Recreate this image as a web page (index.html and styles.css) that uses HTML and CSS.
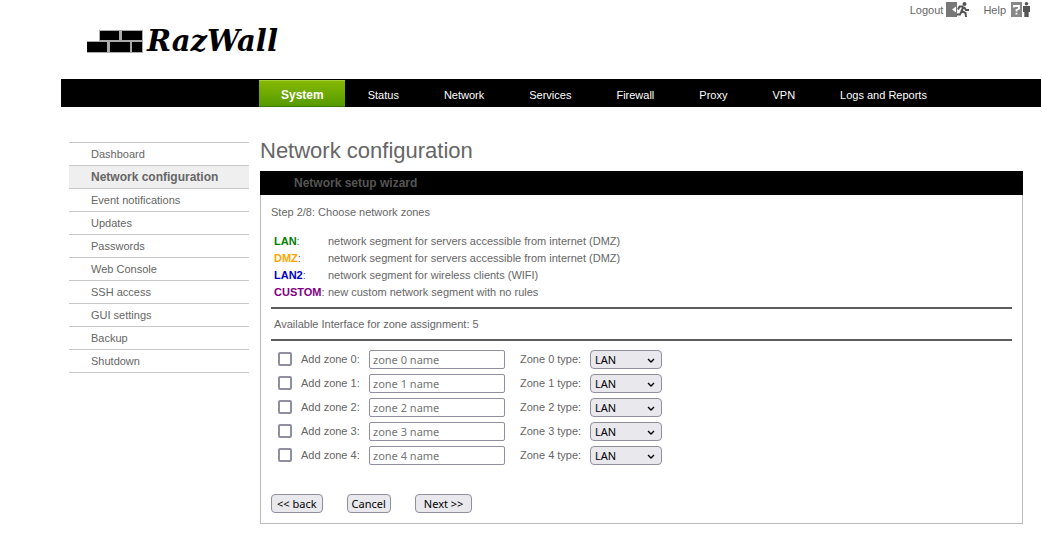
FILE: index.html
```html
<!DOCTYPE html>
<html lang="en">
<head>
<meta charset="utf-8">
<title>RazWall - Network configuration</title>
<link rel="stylesheet" href="styles.css">
</head>
<body>
<div class="page">
  <header class="header">
    <a class="logo" href="#">
      <svg class="logo-bricks" width="56" height="23" viewBox="0 0 56 23" aria-hidden="true">
        <path fill="#aaa" d="M12 0h44v11h-44zM0 11h56v12H0z"/>
        <path d="M13 1h19v9H13zM35 1h20v9H35zM0 12h20v10H0zM23 12h20v10H23zM45 12h10v10H45z"/>
      </svg>
      <span class="logo-name">RazWall</span>
    </a>
    <div class="tools">
      <a href="#">Logout
        <svg width="24" height="16" viewBox="0 0 24 16" aria-hidden="true">
          <path fill="#777" d="M0 0h11v15H0z"/>
          <path fill="#fff" d="M6 7.500l4-3v6z"/>
          <circle cx="18.500" cy="2" r="2" fill="#555"/>
          <path fill="none" stroke="#555" stroke-width="2" d="M17.500 4.500l-2 4.500 4 2 .5 4M15.500 9.500l-1.500 3h-3M17.500 4.500h-4l-1.500 3M18 5l2 3h3"/>
        </svg>
      </a>
      <a href="#">Help
        <svg width="21" height="16" viewBox="0 0 21 16" aria-hidden="true">
          <path fill="#888" d="M0 0h11v15H0z"/>
          <path fill="none" stroke="#fff" stroke-width="1.800" d="M3 5.500V4h5v2.800L5.500 8v1.500M5.500 10.700V12.500"/>
          <circle cx="15.500" cy="1.800" r="1.800" fill="#555"/>
          <path fill="#555" d="M12 4h7v6h-1.300v5h-4.400v-5H12z"/>
        </svg>
      </a>
    </div>
  </header>

  <nav class="menu" aria-label="Main">
    <a class="active" href="#">System</a>
    <a href="#">Status</a>
    <a href="#">Network</a>
    <a href="#">Services</a>
    <a href="#">Firewall</a>
    <a href="#">Proxy</a>
    <a href="#">VPN</a>
    <a href="#">Logs and Reports</a>
  </nav>

  <div class="columns">
    <nav class="side" aria-label="System">
      <a href="#">Dashboard</a>
      <a class="active" href="#">Network configuration</a>
      <a href="#">Event notifications</a>
      <a href="#">Updates</a>
      <a href="#">Passwords</a>
      <a href="#">Web Console</a>
      <a href="#">SSH access</a>
      <a href="#">GUI settings</a>
      <a href="#">Backup</a>
      <a href="#">Shutdown</a>
    </nav>

    <main class="content">
      <h1>Network configuration</h1>
      <section class="panel">
        <h2>Network setup wizard</h2>
        <form class="wizard">
          <p class="step">Step 2/8: Choose network zones</p>
          <dl class="legend">
            <dt><b class="lan">LAN</b>:</dt><dd>network segment for servers accessible from internet (DMZ)</dd>
            <dt><b class="dmz">DMZ</b>:</dt><dd>network segment for servers accessible from internet (DMZ)</dd>
            <dt><b class="lan2">LAN2</b>:</dt><dd>network segment for wireless clients (WIFI)</dd>
            <dt><b class="custom">CUSTOM</b>:</dt><dd>new custom network segment with no rules</dd>
          </dl>
          <p class="available">Available Interface for zone assignment: 5</p>
          <div class="zones">
            <div class="zone">
              <input type="checkbox" id="add0"><label for="add0">Add zone 0:</label>
              <input type="text" placeholder="zone 0 name" aria-label="Zone 0 name">
              <label for="type0">Zone 0 type:</label><select id="type0"><option>LAN</option><option>DMZ</option><option>LAN2</option><option>CUSTOM</option></select>
            </div>
            <div class="zone">
              <input type="checkbox" id="add1"><label for="add1">Add zone 1:</label>
              <input type="text" placeholder="zone 1 name" aria-label="Zone 1 name">
              <label for="type1">Zone 1 type:</label><select id="type1"><option>LAN</option><option>DMZ</option><option>LAN2</option><option>CUSTOM</option></select>
            </div>
            <div class="zone">
              <input type="checkbox" id="add2"><label for="add2">Add zone 2:</label>
              <input type="text" placeholder="zone 2 name" aria-label="Zone 2 name">
              <label for="type2">Zone 2 type:</label><select id="type2"><option>LAN</option><option>DMZ</option><option>LAN2</option><option>CUSTOM</option></select>
            </div>
            <div class="zone">
              <input type="checkbox" id="add3"><label for="add3">Add zone 3:</label>
              <input type="text" placeholder="zone 3 name" aria-label="Zone 3 name">
              <label for="type3">Zone 3 type:</label><select id="type3"><option>LAN</option><option>DMZ</option><option>LAN2</option><option>CUSTOM</option></select>
            </div>
            <div class="zone">
              <input type="checkbox" id="add4"><label for="add4">Add zone 4:</label>
              <input type="text" placeholder="zone 4 name" aria-label="Zone 4 name">
              <label for="type4">Zone 4 type:</label><select id="type4"><option>LAN</option><option>DMZ</option><option>LAN2</option><option>CUSTOM</option></select>
            </div>
          </div>
          <div class="actions">
            <button type="button">&lt;&lt; back</button>
            <button type="button" class="cancel">Cancel</button>
            <button type="button" class="next">Next &gt;&gt;</button>
          </div>
        </form>
      </section>
    </main>
  </div>
</div>
</body>
</html>
```
FILE: styles.css
```css
* {
  box-sizing: border-box;
}

body {
  margin: 0;
  background: #fff;
  color: #666;
  font: 11px/16px "Liberation Sans", Arial, sans-serif;
}

a {
  color: inherit;
  text-decoration: none;
}

h1, h2, p, dl, dd {
  margin: 0;
}

.page {
  padding: 0 1px 0 61px;
}

.header {
  display: flex;
  justify-content: space-between;
  align-items: flex-start;
  height: 79px;
  padding: 0 9px 0 26px;
}

.logo {
  display: flex;
  align-items: center;
  gap: 4px;
  padding-top: 25px;
  color: #000;
}

.logo-name {
  font: italic bold 29px/32px "DejaVu Serif", serif;
}

.tools {
  display: flex;
  gap: 13px;
  padding-top: 2px;
}

.tools a {
  display: flex;
  align-items: center;
  gap: 3px;
}

.tools a + a {
  gap: 5px;
}

.menu {
  display: flex;
  gap: 1px;
  padding: 1px 0 0 198px;
  background: #000;
  color: #fff;
  line-height: 27px;
}

.menu a {
  padding: 2px 22px 0;
  height: 27px;
}

.menu .active {
  background: linear-gradient(#86b800, #559b00);
  border-top: 1px solid #a4d13c;
  border-bottom: 1px solid #3d7a00;
  padding: 1px 21px 0 22px;
  font-size: 12px;
  font-weight: bold;
}

.columns {
  display: flex;
  align-items: flex-start;
  gap: 11px;
  padding: 31px 18px 12px 8px;
}

.side {
  flex: 0 0 180px;
  margin-top: 4px;
  border-top: 1px solid #c8c8c8;
}

.side a {
  display: block;
  padding: 0 22px;
  border-bottom: 1px solid #c8c8c8;
  line-height: 22px;
}

.side .active {
  padding-right: 0;
  background: #efefef;
  font-size: 12px;
  font-weight: bold;
}

.content {
  flex: 1;
}

h1 {
  padding-bottom: 8px;
  font-size: 22px;
  font-weight: normal;
  line-height: 25px;
}

.panel {
  border: 1px solid #bbb;
  border-top: 0;
}

h2 {
  margin: 0 -1px;
  padding-left: 34px;
  background: #000;
  color: #555;
  font-size: 12px;
  line-height: 24px;
}

.wizard {
  padding: 9px 10px 10px;
}

.legend {
  display: grid;
  grid-template-columns: 54px 1fr;
  margin-top: 13px;
  padding-left: 3px;
  line-height: 17px;
}

dt {
  white-space: nowrap;
}

.lan { color: #008000; }
.dmz { color: #ffa500; }
.lan2 { color: #0000c8; }
.custom { color: #800080; }

.available {
  margin: 6px 0;
  padding-left: 3px;
  border: solid #5c5c5c;
  border-width: 2px 0;
  line-height: 30px;
}

.zone {
  display: grid;
  grid-template-columns: 14px 59px 136px 67px 72px;
  column-gap: 9px;
  align-items: center;
  height: 24px;
  padding-left: 7px;
}

.zone label {
  white-space: nowrap;
}

.zone label[for^="type"] {
  padding-left: 6px;
}

input, select, button {
  margin: 0;
  border: 1px solid #8f8f9d;
  font: 11px/17px "Noto Sans", "Open Sans", sans-serif;
}

input[type="checkbox"] {
  appearance: none;
  width: 14px;
  height: 14px;
  border-width: 2px;
  border-radius: 2px;
  background: #fff;
}

input[type="checkbox"]:checked {
  background: #0060df;
}

input[type="text"] {
  width: 100%;
  height: 19px;
  padding: 1px 3px 0;
  border-radius: 2px;
  background: #fff;
}

input::placeholder {
  color: #757575;
}

select {
  appearance: none;
  width: 100%;
  height: 19px;
  padding: 0 4px;
  border-radius: 4px;
  background: #e9e9ed url("data:image/svg+xml,%3Csvg xmlns='http://www.w3.org/2000/svg' width='8' height='6'%3E%3Cpath d='M1 1l3 3 3-3' fill='none' stroke='%23000' stroke-width='1.4'/%3E%3C/svg%3E") no-repeat right 6px top 7px;
  color: #000;
}

.actions {
  display: flex;
  gap: 24px;
  margin-top: 27px;
}

button {
  height: 19px;
  padding: 0 5px;
  border-radius: 4px;
  background: #e9e9ed;
  color: #000;
}

.cancel {
  padding: 0 4px;
}

.next {
  padding: 0 8px;
}
```
